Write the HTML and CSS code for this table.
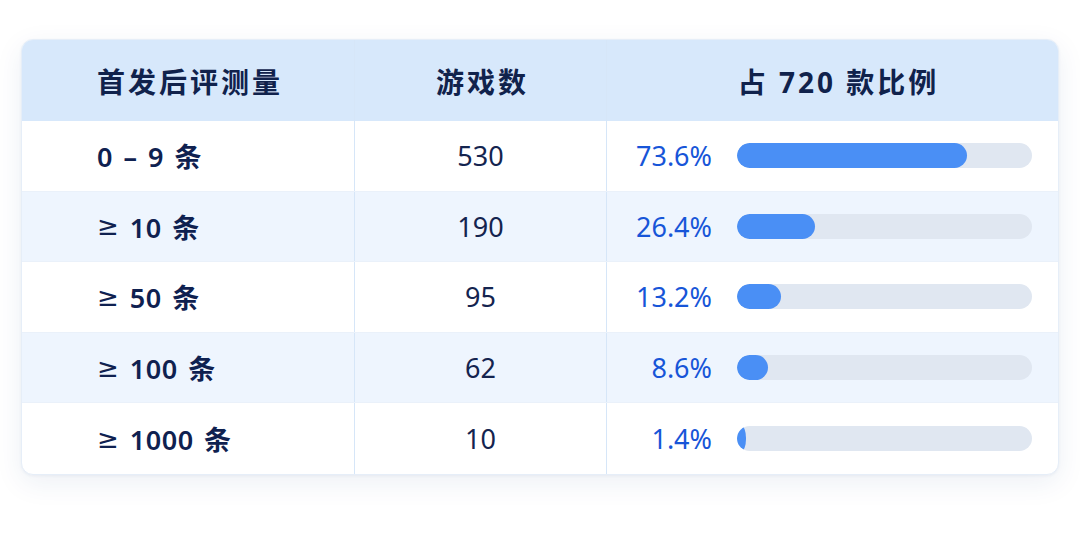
FILE: index.html
```html
<!DOCTYPE html>
<html lang="zh">
<head>
<meta charset="utf-8">
<link rel="stylesheet" href="styles.css">
</head>
<body>
<div class="page">
  <div class="card">
    <div class="row head">
      <div class="cell c1">首发后评测量</div>
      <div class="cell c2">游戏数</div>
      <div class="cell c3 center">占 720 款比例</div>
    </div>
    <div class="row">
      <div class="cell c1">0 – 9 条</div>
      <div class="cell c2 num">530</div>
      <div class="cell c3"><span class="pct">73.6%</span><span class="track"><span class="fill" style="width:78%"></span></span></div>
    </div>
    <div class="row alt">
      <div class="cell c1"><span class="ge">≥</span> 10 条</div>
      <div class="cell c2 num">190</div>
      <div class="cell c3"><span class="pct">26.4%</span><span class="track"><span class="fill" style="width:26.4%"></span></span></div>
    </div>
    <div class="row">
      <div class="cell c1"><span class="ge">≥</span> 50 条</div>
      <div class="cell c2 num">95</div>
      <div class="cell c3"><span class="pct">13.2%</span><span class="track"><span class="fill" style="width:15%"></span></span></div>
    </div>
    <div class="row alt">
      <div class="cell c1"><span class="ge">≥</span> 100 条</div>
      <div class="cell c2 num">62</div>
      <div class="cell c3"><span class="pct">8.6%</span><span class="track"><span class="fill" style="width:10.5%"></span></span></div>
    </div>
    <div class="row last">
      <div class="cell c1"><span class="ge">≥</span> 1000 条</div>
      <div class="cell c2 num">10</div>
      <div class="cell c3"><span class="pct">1.4%</span><span class="track"><span class="fill thin" style="width:3.2%"></span></span></div>
    </div>
  </div>
</div>
</body>
</html>
```

FILE: styles.css
```css
* { box-sizing: border-box; }
html, body {
  margin: 0;
  padding: 0;
  background: #ffffff;
  width: 1080px;
  height: 540px;
  overflow: hidden;
}
.page {
  padding: 39px 21px 0 21px;
  font-family: "Noto Sans", "Noto Sans CJK SC", sans-serif;
}
.card {
  width: 1038px;
  border-radius: 12px;
  background: #ffffff;
  overflow: hidden;
  box-shadow: 0 8px 28px rgba(30, 70, 130, 0.08), 0 1px 3px rgba(30, 70, 130, 0.06);
  border: 1px solid #e6eef8;
}
.row {
  display: grid;
  grid-template-columns: 333px 252px 1fr;
  height: 70.6px;
  border-bottom: 1px solid #eaf1fa;
}
.row.last { border-bottom: none; }
.row.alt { background: #eef5fe; }
.row.head {
  height: 81px;
  background: #d7e8fb;
  border-bottom: none;
}
.cell {
  display: flex;
  align-items: center;
  font-size: 27px;
  color: #0f2150;
  white-space: pre;
}
.c1 {
  padding-left: 75px;
  font-weight: 600;
  letter-spacing: 0.5px;
  word-spacing: 3px;
  border-right: 1px solid #d6e6f8;
}
.ge {
  font-family: "DejaVu Sans", sans-serif;
  font-weight: 400;
  font-size: 26px;
}
.c2 {
  justify-content: center;
  border-right: 1px solid #d6e6f8;
}
.num { font-weight: 400; color: #14244f; }
.head .cell {
  font-size: 28px;
  font-weight: 700;
  color: #10224c;
  letter-spacing: 3px;
  word-spacing: 0;
}
.head .c2 { padding-left: 4px; }
.c3.center { justify-content: center; padding-left: 12px; }
.c3 { padding-left: 29px; }
.pct {
  width: 76px;
  text-align: right;
  color: #1755d8;
  font-size: 27px;
  font-weight: 400;
}
.track {
  margin-left: 25px;
  width: 295px;
  height: 25px;
  border-radius: 13px;
  background: #e0e7f1;
  display: flex;
  overflow: hidden;
}
.fill {
  height: 100%;
  border-radius: 13px;
  background: #4a8ff5;
}
.fill.thin { border-radius: 50%; }
```
